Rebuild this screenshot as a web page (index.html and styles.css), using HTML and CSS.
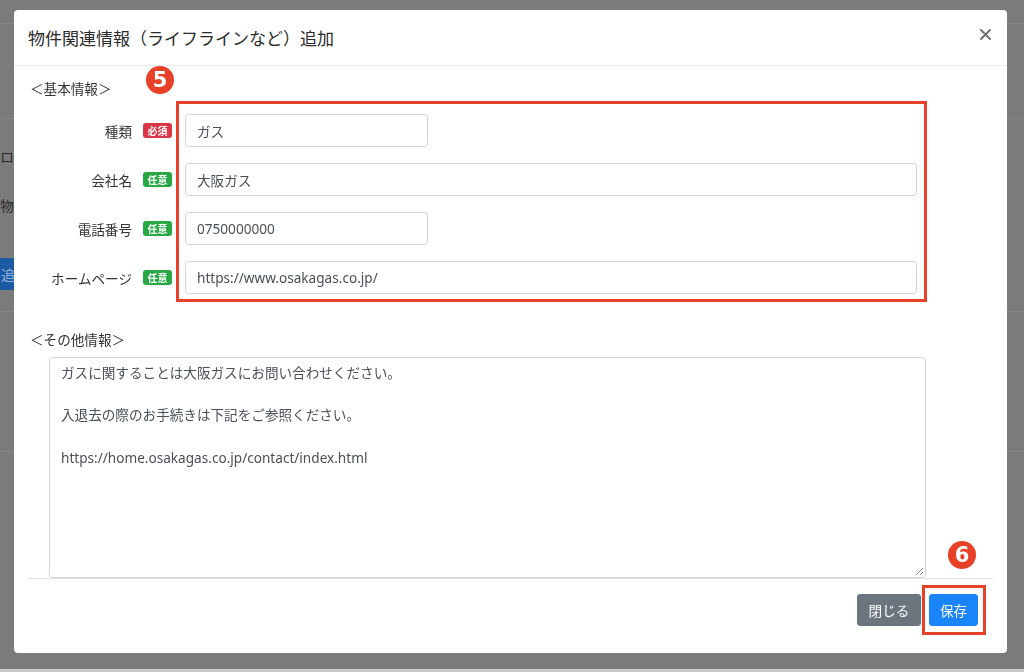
FILE: index.html
```html
<!DOCTYPE html>
<html lang="ja">
<head>
<meta charset="utf-8">
<title>物件関連情報（ライフラインなど）追加</title>
<link rel="stylesheet" href="styles.css">
</head>
<body>
<div class="page">
  <div class="pr pr-top"></div>
  <div class="pr pr-nav"></div>
  <div class="pr pr-t1"><span class="bg-text">ローン</span></div>
  <div class="pr pr-t2"><span class="bg-text">物件</span></div>
  <div class="pr pr-gap"></div>
  <div class="pr pr-btn"><span class="bg-btn">追加</span></div>
  <div class="pr pr-line"></div>
  <div class="pr pr-line2"></div>
  <div class="pr pr-fill"></div>
  <div class="pr pr-bottom"></div>
</div>

<div class="modal">
  <header class="modal-header">
    <h5 class="modal-title">物件関連情報（ライフラインなど）追加</h5>
    <button class="close" type="button" aria-label="閉じる"><svg width="11" height="11" viewBox="0 0 11 11"><path d="M1 1 L10 10 M10 1 L1 10" stroke="#6f6f6f" stroke-width="1.8" stroke-linecap="round" fill="none"/></svg></button>
  </header>
  <div class="modal-body">
    <div class="section-title">＜基本情報＞</div>
    <div class="basic">
      <span class="marker m5">5</span>
      <div class="labels">
        <div class="lab">種類<span class="badge req">必須</span></div>
        <div class="lab">会社名<span class="badge opt">任意</span></div>
        <div class="lab">電話番号<span class="badge opt">任意</span></div>
        <div class="lab">ホームページ<span class="badge opt">任意</span></div>
      </div>
      <div class="fields">
        <div class="input short">ガス</div>
        <div class="input">大阪ガス</div>
        <div class="input short">0750000000</div>
        <div class="input">https://www.osakagas.co.jp/</div>
      </div>
    </div>
    <div class="section-title other">＜その他情報＞</div>
    <div class="textarea">
      <div class="tl">ガスに関することは大阪ガスにお問い合わせください。</div>
      <div class="tl"></div>
      <div class="tl">入退去の際のお手続きは下記をご参照ください。</div>
      <div class="tl"></div>
      <div class="tl">https://home.osakagas.co.jp/contact/index.html</div>
      <svg class="grip" width="10" height="10" viewBox="0 0 10 10"><path d="M9 2 L2 9 M9 6 L6 9" stroke="#888" stroke-width="1" fill="none"/></svg>
    </div>
  </div>
  <footer class="modal-footer">
    <span class="marker m6">6</span>
    <button class="btn btn-gray" type="button">閉じる</button>
    <span class="hl"><button class="btn btn-blue" type="button">保存</button></span>
  </footer>
</div>
</body>
</html>
```

FILE: styles.css
```css
html, body {
  margin: 0;
  padding: 0;
}
body {
  background: #7b7b7b;
  font-family: "Noto Sans", "Noto Sans CJK JP", sans-serif;
  height: 672px;
  overflow: hidden;
}

/* background page (dimmed) */
.page {
  display: flex;
  flex-direction: column;
  height: 672px;
}
.pr { flex: 0 0 auto; }
.pr-top { height: 23px; border-bottom: 1px solid #878787; }
.pr-nav { height: 94px; border-bottom: 1px solid #878787; }
.pr-t1 { height: 74px; display: flex; align-items: center; }
.pr-t2 { height: 24px; display: flex; align-items: center; }
.bg-text {
  font-family: "Noto Sans CJK JP", sans-serif;
  font-size: 14px;
  color: #2c2c2c;
}
.pr-gap { height: 41px; }
.pr-btn { height: 32px; display: flex; }
.bg-btn {
  background: #1d5aa6;
  color: #8fb0d8;
  font-family: "Noto Sans CJK JP", sans-serif;
  font-size: 14px;
  line-height: 32px;
  padding: 0 8px 0 1px;
}
.pr-line { height: 21px; border-bottom: 1px solid #878787; }
.pr-line2 { height: 139px; border-bottom: 1px solid #878787; }
.pr-fill { flex: 1 1 auto; }
.pr-bottom { height: 3px; background: #c9c9c9; }

/* modal */
.modal {
  position: fixed;
  left: 14px;
  top: 10px;
  width: 993px;
  height: 643px;
  background: #fff;
  border-radius: 4px;
  display: flex;
  flex-direction: column;
  color: #333;
}
.modal-header {
  box-sizing: border-box;
  height: 56px;
  border-bottom: 1px solid #e9ecef;
  display: flex;
  align-items: center;
  justify-content: space-between;
  padding: 0 16px 0 14px;
  flex: 0 0 auto;
}
.modal-title {
  margin: 0;
  font-size: 17px;
  font-weight: 400;
  color: #2a2a2a;
  font-family: "Noto Sans CJK JP", sans-serif;
}
.close {
  border: 0;
  background: transparent;
  padding: 0;
  margin-top: -6px;
  width: 11px;
  height: 11px;
  display: flex;
}

.modal-body {
  padding: 12px 14px 0;
  flex: 0 0 auto;
}
.section-title {
  font-family: "Noto Sans CJK JP", sans-serif;
  font-size: 13.6px;
  line-height: 20px;
  padding-left: 2px;
  color: #333;
}
.section-title.other { margin-top: 27px; }

.basic {
  display: flex;
  margin-top: 3px;
  position: relative;
}
.labels {
  width: 148px;
  padding-top: 13px;
  display: flex;
  flex-direction: column;
  gap: 16px;
  flex: 0 0 auto;
  box-sizing: border-box;
}
.lab {
  height: 33px;
  display: flex;
  align-items: center;
  justify-content: flex-end;
  padding-right: 4px;
  font-family: "Noto Sans CJK JP", sans-serif;
  font-size: 13.6px;
  color: #333;
}
.badge {
  margin-left: 11px;
  width: 29px;
  height: 15px;
  border-radius: 3px;
  color: #fff;
  font-family: "Noto Sans CJK JP", sans-serif;
  font-size: 10px;
  font-weight: 700;
  display: flex;
  align-items: center;
  justify-content: center;
}
.badge.req { background: #dc3545; }
.badge.opt { background: #28a745; }

.fields {
  flex: 0 0 751px;
  box-sizing: border-box;
  border: 3px solid #e8412a;
  padding: 10px 7px 5px 6px;
  display: flex;
  flex-direction: column;
  gap: 16px;
}
.input {
  height: 33px;
  box-sizing: border-box;
  border: 1px solid #ced4da;
  border-radius: 3.4px;
  padding: 0 11px;
  display: flex;
  align-items: center;
  font-size: 13.6px;
  color: #495057;
}
.input.short { width: 243px; }

.marker {
  position: absolute;
  width: 28px;
  height: 28px;
  border-radius: 50%;
  background: #e8412a;
  color: #fff;
  font-family: "DejaVu Sans", sans-serif;
  font-weight: 700;
  font-size: 21px;
  line-height: 28px;
  text-align: center;
}
.m5 { left: 118px; top: -35px; }
.m6 { left: 920px; top: -38px; }

.textarea {
  position: relative;
  margin: 8px 0 0 21px;
  width: 877px;
  height: 221px;
  box-sizing: border-box;
  border: 1px solid #ced4da;
  border-radius: 3.4px;
  padding: 4px 11px;
  font-size: 13.6px;
  line-height: 21.2px;
  color: #495057;
}
.tl { height: 21.2px; white-space: nowrap; }
.grip {
  position: absolute;
  right: 1px;
  bottom: 1px;
}

.modal-footer {
  position: relative;
  margin: 0 14px;
  border-top: 1px solid #dee2e6;
  padding: 6px 7px 0 0;
  display: flex;
  justify-content: flex-end;
  align-items: flex-start;
}
.btn {
  height: 32px;
  border: 0;
  border-radius: 3.4px;
  color: #fff;
  font-family: "Noto Sans CJK JP", sans-serif;
  font-size: 13.6px;
  padding: 0;
  text-align: center;
}
.btn-gray {
  background: #6c757d;
  width: 64px;
  margin-top: 9px;
}
.btn-blue {
  background: #1a85fa;
  width: 49px;
}
.hl {
  display: flex;
  border: 3px solid #e8412a;
  padding: 6px 5px 6px 4px;
  margin-left: 1px;
}
```
